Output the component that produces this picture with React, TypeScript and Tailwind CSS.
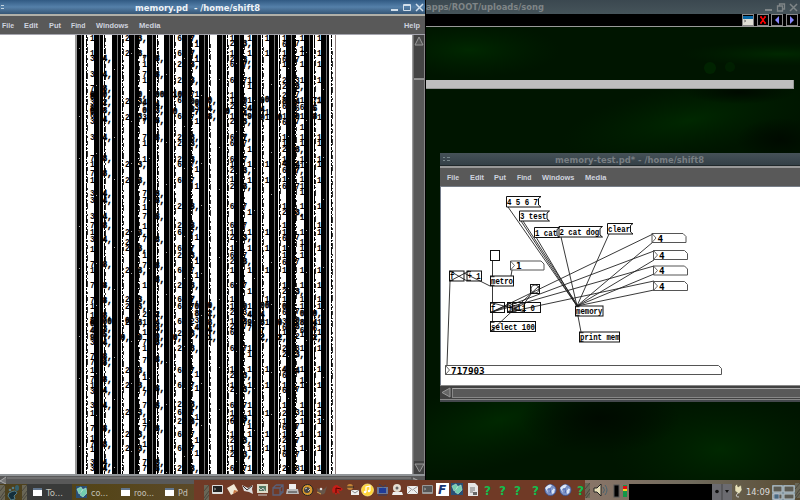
import React from "react";

const STRIPES = Array.from({ length: 15 }, (_, i) => 77 + i * 17.45);

type Column = { x: number; rows: string };

// Each entry is "baseline:text" for one column of overlapping atoms.
const COLUMNS: Column[] = [
  { x: 90, rows: "41:1 56:1 61:3 77:3 91:7 97:0 99:8 105:3 111:8 114:0 118:6 124:3 140:3 161:7 167:1 176:7 183:1 196:3 203:3 219:3 228:7 235:1 242:3 252:1 267:7 273:1 288:7 303:7 309:1 318:1 324:8 326:0 333:4 340:9 345:3 359:7 365:7 373:1 382:7 388:1 394:3 408:3 416:1 431:7 441:1 447:7 452:1 465:3 471:3" },
  { x: 102.500, rows: "61:4, 77:4, 91:8, 97:0, 105:2, 113:8, 122:4, 140:4, 161:8, 176:8, 196:4, 203:4, 219:4, 228:8, 242:4, 267:8, 288:8, 303:8, 318:8, 324:00 331:3, 337:5, 345:4, 359:8, 365:8, 382:8, 393:4, 408:4, 431:8, 447:8, 465:4, 471:4," },
  { x: 125, rows: "41:2 56:2 104:2 120:2 167:2 183:2 235:2 245:2 251:2 273:2 302:2 309:2 323:0 325:2 373:2 388:2 415:2 437:2 451:2" },
  { x: 120.500, rows: "340:0," },
  { x: 137.500, rows: "41:3, 56:3, 97:0, 104:3, 119:3, 167:3, 183:3, 235:3, 251:3, 273:3, 302:3, 309:3, 325:3, 340:0 373:3, 388:3, 415:3, 437:3, 451:3," },
  { x: 142.300, rows: "61:7 67:1 77:7 83:1 105:4 113:0 120:3 124:7 140:7 146:1 162:1 196:7 203:7 210:1 219:7 229:1 242:7 258:1 268:7 288:1 317:2 325:1 335:1 345:7 351:1 363:7 380:1 396:7 408:7 424:1 431:7 447:1 465:7 471:7" },
  { x: 155, rows: "61:8, 77:8, 97:00 107:4, 113:3, 123:8, 140:8, 196:8, 203:8, 219:8, 242:8, 268:8, 282:8, 317:2, 325:4, 331:3, 339:0, 345:8, 362:8, 391:8, 408:8, 431:8, 465:8, 471:8," },
  { x: 177.300, rows: "41:6 56:6 67:2 83:2 103:6 119:6 140:2 146:2 162:2 167:6 183:6 209:2 228:2 235:6 251:6 258:2 273:6 288:2 302:6 309:6 324:6 336:2 351:2 373:6 388:6 407:2 415:6 424:2 437:6 451:6 471:2" },
  { x: 172.800, rows: "97:10 114:0 340:0," },
  { x: 190, rows: "41:7, 56:7, 67:3, 83:3, 97:7 104:0, 112:8, 120:7 140:3, 146:3, 162:3, 167:7 183:7 209:3, 228:3, 235:7 251:7 258:3, 273:7 288:3, 302:7, 309:7 324:2 336:3, 351:3, 373:7 388:7 407:3, 415:7 424:3, 437:7 451:7 471:3," },
  { x: 194.500, rows: "47:1 62:1 97:1 105:0 110:3 115:7 124:1 172:1 189:1 240:1 264:1 278:1 309:0 316:8 323:3 330:4 377:1 391:1 420:1 443:1 456:1" },
  { x: 207.500, rows: "103:0, 111:4, 119:8, 308:0, 316:2, 325:8, 332:4, 340:1," },
  { x: 229.800, rows: "41:1 46:2 56:1 62:2 67:6 83:6 98:1 103:1 109:2 119:1 124:2 140:6 146:6 162:6 167:1 173:2 182:1 189:2 209:6 228:6 235:1 240:2 251:1 258:6 264:2 273:1 288:6 302:1 309:1 315:2 324:1 329:2 335:6 351:6 372:1 378:2 388:1 392:2 408:6 416:1 421:2 424:6 437:1 443:2 451:1 457:2 471:6" },
  { x: 225.300, rows: "114:0 340:" },
  { x: 242.500, rows: "46:3, 62:3, 67:7, 83:7 103:0 109:3 116:4 124:3, 140:7, 146:7 162:7 173:3, 189:3, 209:7 228:7 240:3, 258:7 264:3, 288:7 309:0 315:3 324:8 329:7 351:7 378:3, 392:3, 408:7 421:3, 424:7 443:3, 457:3, 471:7" },
  { x: 247.200, rows: "41:1 56:1 83:1 89:1 103:1 111:4 119:9 152:1 167:1 183:1 215:1 235:1 251:1 273:1 294:1 309:1 317:4 325:9 331:7 351:1 357:1 372:1 388:1 408:1 416:1 429:1 437:1 451:1 471:1" },
  { x: 260, rows: "103:0 112:4 120:9 308:0 317:4 325:8 333:7 340:2," },
  { x: 264.700, rows: "41:1 56:1 102:0, 115:1 120:1 167:1 183:1 235:1 251:1 273:1 302:1 308:0 325:1 372:1 388:1 416:1 437:1 451:1" },
  { x: 282, rows: "41:1 47:6 56:1 62:6 67:1 83:2 89:2 98:2 104:8 109:6 119:1 125:6 140:1 146:1 152:2 162:1 166:4 173:6 182:1 189:6 209:1 215:2 228:1 235:1 241:6 251:1 258:1 265:6 273:1 288:1 294:2 302:1 309:0 315:6 324:3 330:6 335:1 351:2 357:2 372:4 378:6 388:1 393:6 408:1 416:2 424:1 430:6 437:1 443:2 451:1 457:6 471:2" },
  { x: 277.500, rows: "120:0 325:0 340:2," },
  { x: 295, rows: "46:7 62:7 83:3 89:3, 97:7 104:4 111:6 119:0 124:7 152:3, 167:4 173:7, 189:7 215:3, 240:7 264:7 294:3, 314:7 323:0 329:8 339:2 351:3 357:3, 373:4 392:7 415:3 429:7 443:7 457:7 471:3" },
  { x: 299.700, rows: "41:1 52:1 56:1 67:1 83:1 103:1 110:6 119:1 130:1 140:1 146:1 162:1 168:1 182:1 189:1 195:1 209:1 220:1 235:1 245:1 251:1 258:1 273:1 288:1 302:1 309:1 316:0 325:8 333:6 337:1 351:1 372:1 383:1 388:1 408:1 416:1 424:1 437:1 451:1 471:1" },
  { x: 312.500, rows: "103:7 111:5 119:8 316:0, 325:4 331:6 340:2," },
  { x: 317, rows: "41:1 56:1 67:1 83:1 103:1, 120:1 140:1 146:1 162:1 167:1 183:1 209:1 228:1 235:1 251:1 273:1 288:1 302:1 309:1 325:1 335:1 351:1 372:1 388:1 408:1 416:1 424:1 437:1 451:1 471:1" },
];

function MemoryCanvas() {
  return (
    <svg width="412" height="439" viewBox="0 35 412 439" className="block bg-white" shapeRendering="crispEdges">
      <rect x="75" y="35" width="2" height="439" fill="#999" />
      {STRIPES.map((s, i) => {
        const x = Math.round(s);
        const dots = i === 0 ? 86.5 : i === 14 ? 331.5 : x + 10.5 - (i % 3 === 0 ? 1 : 0);
        return (
          <g key={i}>
            <rect x={x} y="35" width={i === 0 ? 7 : i === 14 ? 8 : 9} height="439" fill="#000" />
            <rect x={x + (i === 0 ? 4 : 5)} y="35" width="1" height="439" fill="#777" />
            <line x1={dots} x2={dots} y1="35" y2="474" stroke="#000" strokeWidth="1" strokeDasharray={i % 2 ? "13 1 5 1 4 2" : "3 1 8 1 2 1"} />
            <line x1={dots + 1} x2={dots + 1} y1={37 + i} y2="474" stroke="#333" strokeWidth="1" strokeDasharray="4 3 1 2 6 5 2 3" />
            <line x1={x + 2.5} x2={x + 2.5} y1={48 + ((i * 37) % 53)} y2="474" stroke="#aaa" strokeWidth="1" strokeDasharray="1 67 1 41" />
          </g>
        );
      })}
      <rect x="335" y="35" width="1" height="439" fill="#8c7d7d" />
      <g fill="#000" fontFamily="'Liberation Mono', monospace" fontSize="9.6" fontWeight="bold">
        {COLUMNS.map((c) =>
          c.rows.split(" ").map((r, j) => {
            const [y, t] = r.split(":");
            const heavy = /[04589]/.test(t) || t.includes(",");
            return (
              <text key={`${c.x}-${j}`} x={c.x} y={y} textLength={t.length * 4.7} lengthAdjust="spacingAndGlyphs" stroke="#000" strokeWidth={heavy ? 0.5 : 0}>
                {t}
              </text>
            );
          })
        )}
      </g>
    </svg>
  );
}

function Message({ x, y, w, h, text }: { x: number; y: number; w: number; h: number; text: string }) {
  return (
    <g>
      <path d={`M${x} ${y}h${w}l-2.500 2v${h - 4}l2.500 2h${-w}z`} fill="none" stroke="#111" />
      <text x={x + 0.5} y={y + 8} textLength={text.length * 4.42} lengthAdjust="spacingAndGlyphs">{text}</text>
    </g>
  );
}

function Box({ x, y, w, text, h = 10 }: { x: number; y: number; w: number; text: string; h?: number }) {
  return (
    <g>
      <rect x={x} y={y} width={w} height={h} fill="none" stroke="#111" />
      <path d={`M${x} ${y + 0.7}h4M${x} ${y + h - 0.7}h4`} stroke="#111" />
      <text x={x + 0.5} y={y + 8} textLength={text.length * 4.4} lengthAdjust="spacingAndGlyphs">{text}</text>
    </g>
  );
}

function NumberBox({ x, y, w, text }: { x: number; y: number; w: number; text: string }) {
  return (
    <g>
      <path d={`M${x} ${y}h${w - 3}l3 3v6h${-w}z`} fill="none" stroke="#555" />
      <path d={`M${x} ${y}l4 4.5l-4 4.5`} fill="none" stroke="#444" strokeWidth=".8" />
      <text x={x + 5.6} y={y + 8} fontFamily="'DejaVu Sans Mono', monospace" fontSize="9" textLength={text.length * 5.6} lengthAdjust="spacingAndGlyphs">{text}</text>
    </g>
  );
}

function PatchCanvas() {
  return (
    <svg width="359" height="198" viewBox="441 187 359 198" className="block bg-white">
      <path
        d="M508 207L577 306M521 221L577 306M523 221L578 306M536 237L577 306M561 237L577 306M609 234L577 306M653 242L577 306M654 260L577 306M654 274L577 306M654 290L577 306M492 312L653 234M492 312L654 251M492 312L654 266M509 312L654 281M492.500 260V276M492.500 286V302M492.500 312V321M512 270L511 276M450 281L447 365M450 281L469 271M467 281L450 271M464 273L490 286M491 331L539 286M531 294L524 304M492 312L511 303M493 303L525 312M507 312L526 303M578 316L581 332"
        fill="none" stroke="#222" strokeWidth=".9"
      />
      <g fontFamily="'Liberation Mono', monospace" fontSize="9.6" fontWeight="bold" fill="#000">
        <Message x={506.5} y={196.5} w={34.5} h={10.5} text="4 5 6 7" />
        <Message x={519.5} y={211} w={30} h={10} text="3 test" />
        <Message x={534.5} y={227.5} w={25} h={10} text="1 cat" />
        <Message x={559} y={226.5} w={43.5} h={10.5} text="2 cat dog" />
        <Message x={607.500} y={223.5} w={25.5} h={10.5} text="clear" />
        <rect x="490.500" y="250.500" width="9" height="10" fill="none" stroke="#111" />
        <NumberBox x={510.5} y={261} w={33.5} text="1" />
        <Box x={490.5} y={276} w={23} text="metro" />
        <Box x={449.500} y={271} w={14.5} text="f" />
        <Box x={467} y={271} w={14.5} text="+ 1" />
        <rect x="530.500" y="284.500" width="9" height="9" fill="none" stroke="#111" />
        <circle cx="535" cy="289" r="4" fill="none" stroke="#333" strokeWidth=".8" />
        <Box x={490.5} y={302.5} w={14} text="f" />
        <Box x={507.500} y={302.5} w={17} text="+ 1" />
        <Box x={512.5} y={302.5} w={28} text="% 1 0" />
        <Box x={490.5} y={321.5} w={45} text="select 100" />
        <Box x={575.5} y={306} w={27.5} text="memory" />
        <Box x={579.5} y={332} w={40} text="print mem" />
        <NumberBox x={652} y={233.500} w={34} text="4" />
        <NumberBox x={653.500} y={250.500} w={34} text="4" />
        <NumberBox x={653.500} y={266} w={34} text="4" />
        <NumberBox x={653.500} y={281.500} w={34} text="4" />
        <NumberBox x={445.500} y={365.5} w={276} text="717903" />
      </g>
    </svg>
  );
}

function MenuLabel({ text, w }: { text: string; w: number }) {
  return (
    <svg width={w} height="12" className="block overflow-visible fill-[#cfd3df]">
      <text x="0" y="9" fontFamily="'Liberation Sans', sans-serif" fontSize="8" fontWeight="bold" textLength={w} lengthAdjust="spacingAndGlyphs">{text}</text>
    </svg>
  );
}

function Menus() {
  return (
    <div className="flex items-center gap-[10.5px]">
      <MenuLabel text="File" w={12} />
      <MenuLabel text="Edit" w={14} />
      <MenuLabel text="Put" w={12} />
      <MenuLabel text="Find" w={14.5} />
      <MenuLabel text="Windows" w={32.5} />
      <MenuLabel text="Media" w={21.5} />
    </div>
  );
}

function Title({ text, w, size = 8 }: { text: string; w: number; size?: number }) {
  return (
    <svg width={w} height="13" className="block shrink-0 overflow-visible fill-current">
      <text x="0" y="9.500" textLength={w} lengthAdjust="spacingAndGlyphs" fontFamily="'DejaVu Sans', sans-serif" fontWeight="bold" fontSize={size} className="whitespace-pre">{text}</text>
    </svg>
  );
}

function BackWindow() {
  return (
    <div className="absolute left-[426px] top-0 w-[374px]">
      <div className="flex h-[14px] items-center justify-between bg-gradient-to-b from-[#3b4850] to-[#46545a] text-[#7f8587]">
        <svg width="120" height="13" className="block overflow-visible fill-current">
          <text x="0" y="9" fontSize="8" fontWeight="bold" fontFamily="'DejaVu Sans', sans-serif" textLength="118" lengthAdjust="spacingAndGlyphs">apps/ROOT/uploads/song</text>
        </svg>
        <svg width="38" height="12" className="block stroke-current fill-none">
          <path d="M3 9h7" strokeWidth="2" />
          <path d="M15.500 5h5v5h-5zM17.500 5V3h5v5h-2" strokeWidth="1.300" />
          <path d="M28 3l7 7M35 3l-7 7" strokeWidth="1.500" />
        </svg>
      </div>
      <div className="flex h-[13px] justify-end gap-[2.5px] border-b border-[#999] bg-black pr-[2.5px]">
        {[0, 1, 2, 3].map((i) => (
          <svg key={i} width="12" height="12" className="block" viewBox="0 0 12 12">
            <rect x=".5" y=".5" width="11" height="11" fill="#000" stroke="#888" />
            {i === 0 && <><path d="M1 2h10v9H1z" fill="#deded4" /><path d="M1 2h10v3H1z" fill="#0869a8" /><path d="M2 6l2 1-2 1" stroke="#555" fill="none" strokeWidth=".6" /></>}
            {i === 1 && <path d="M4 3l4 6M8 3L4 9M3 3h2M7 3h2M3 9h2M7 9h2" stroke="#f00" strokeWidth="1.400" />}
            {i === 2 && <path d="M8 2v8L4 6z" fill="#8888ff" />}
            {i === 3 && <path d="M4 2v8l4-4z" fill="#8888ff" />}
          </svg>
        ))}
      </div>
      <div className="mt-[53px] h-[9px] w-[368px] border-b border-r border-[#999] bg-[#bebebe]" />
    </div>
  );
}

function TestWindow() {
  return (
    <div className="absolute left-[440px] top-[153px] flex h-[249px] w-[360px] flex-col bg-[#747c8a]">
      <div className="flex h-[12px] items-center bg-gradient-to-b from-[#465258] to-[#344047] pl-[3px] text-[#787e82]">
        <svg width="8" height="8" className="fill-[#78878b]"><path d="M0 2h2v1H0zM4 2h3v1H4zM0 5h2v1H0zM4 5h3v1H4z" /></svg>
        <div className="ml-[104px]"><Title text="memory-test.pd* - /home/shift8" w={149} /></div>
      </div>
      <div className="h-px bg-[#20282b]" />
      <div className="flex h-[21px] items-center border-b border-t-2 border-b-[#777e88] border-t-[#999] bg-[#595959] pl-[7px]"><Menus /></div>
      <div className="h-[198px] pl-px"><PatchCanvas /></div>
      <div className="flex h-[15px] items-center border-y border-[#888] bg-[#414141]">
        <svg width="12" height="11"><path d="M10 1L2 5.500L10 10z" fill="#666" stroke="#999" /></svg>
        <div className="h-[10px] flex-1 border border-r-0 border-[#888] border-t-[#aaa] bg-[#595959]" />
      </div>
      <div className="h-[2px] bg-[#44484c]" />
    </div>
  );
}

function MainWindow() {
  return (
    <div className="absolute left-0 top-0 flex h-[485px] w-[426px] flex-col border-r border-black bg-[#595959]">
      <div className="flex h-[14px] items-center bg-gradient-to-b from-[#315a83] via-[#5580a9] to-[#365675] text-[#eef3f8]">
        <svg width="8" height="8" className="ml-px fill-[#c2d2df]"><path d="M0 2h3v1H0zM0 5h3v1H0z" /></svg>
        <div className="ml-[125.500px]"><Title text="memory.pd  - /home/shift8" w={125} /></div>
        <svg width="36" height="12" className="ml-auto block fill-none stroke-[#d2dfeb]">
          <path d="M2 9h7" strokeWidth="2" /><path d="M14.500 3.500h7v6h-7zM14 4.500h8" /><path d="M27 3l7 7M34 3l-7 7" strokeWidth="1.500" />
        </svg>
      </div>
      <div className="flex h-[21px] items-center justify-between border-b border-t-2 border-b-[#a5a5ae] border-t-[#b1b0a8] bg-[#595959] pl-[1.500px] pr-[5px]">
        <Menus />
        <MenuLabel text="Help" w={16} />
      </div>
      <div className="flex h-[439px]">
        <MemoryCanvas />
        <svg width="13" height="439" className="block bg-[#424242]">
          <path d="M.5 0v439" stroke="#999" strokeWidth="2" /><path d="M2 0h10v42H2z" fill="#444" /><path d="M7 2l4 8H3z" fill="#555" stroke="#999" />
          <rect x="2" y="44" width="10" height="382" fill="#595959" /><path d="M2 44h10" stroke="#aaa" strokeWidth="1.500" /><path d="M3 429h9l-4.500 8z" fill="#555" stroke="#999" /><path d="M12.500 0v439" stroke="#888" />
        </svg>
      </div>
      <div className="h-[11px] border-t-2 border-[#929699] bg-[#595959]">
        <svg width="425" height="9"><path d="M6 1L0 5l6 3M413 2l8 4-8 3" fill="#777" stroke="#aaa" /><path d="M7 2h404" stroke="#888" /></svg>
      </div>
    </div>
  );
}

function TrayIcon({ i }: { i: number }) {
  if ([18, 19, 20, 21, 24].includes(i)) return <text x="7.500" y="11.500" textAnchor="middle" fill="#12bf4f" fontFamily="'DejaVu Sans', sans-serif" fontWeight="bold" fontSize="12">?</text>;
  switch (i) {
    case 0: case 14: return <><rect x="2" y="2" width="11" height="9" rx="1" fill={i ? "#999" : "#ddd"} /><rect x="3" y="3" width="9" height="6" fill={i ? "#555" : "#222"} /><path d="M4 5l2 1-2 1" stroke="#aaa" fill="none" strokeWidth=".7" /></>;
    case 1: return <><path d="M2 5l7-4 4 7-7 4z" fill="#f0e8d6" /><path d="M8 11l5-3-4-1" fill="#c87843" /></>;
    case 2: return <><path d="M2 2l6 3 5-3-1 4 1 5-4-2-5-1z" fill="#ddd" /><path d="M3 3l4 4M12 3L7 7" stroke="#333" /></>;
    case 3: return <><rect x="2" y="1" width="11" height="9" fill="#dedbc8" /><rect x="4" y="3" width="7" height="5" fill="#567963" /><path d="M3 12h9M4 5l2 2 2-2 2 3" stroke="#ccc" fill="none" /></>;
    case 4: return <path d="M3 5h7v7H3zM6 2h7v7h-3M3 5l3-3M10 5l3-3M10 12l3-3" fill="none" stroke="#596078" strokeWidth="1.300" />;
    case 5: return <><path d="M4 1h7v5H4z" fill="#eee" /><path d="M2 6h11l1 5H1z" fill="#bbb" /><path d="M3 9h9" stroke="#333" /></>;
    case 6: return <><circle cx="7.500" cy="7" r="5.500" fill="#d7982d" stroke="#222" /><circle cx="7" cy="7" r="3" fill="#444" /><path d="M5 6l2-1M8 8l2-2" stroke="#ccc" fill="none" /></>;
    case 7: return <><path d="M2 5l4 2q3 0 6-4l-2 7q-3 3-7 0z" fill="#67564a" /><circle cx="6" cy="6" r="1.300" fill="#ddd" /><path d="M2 9l4 2" stroke="#d7a34a" /></>;
    case 8: return <><path d="M2 7q1-5 5-5l6 4-2 2-3-1 2 4-3-1-1 2-2-3-1 2z" fill="#c61e17" /><path d="M6 10V5l5 1" stroke="#500" fill="none" /></>;
    case 9: return <><circle cx="5" cy="4" r="3" fill="#c68538" /><path d="M2 4h7" stroke="#222" /><rect x="6" y="7" width="8" height="5" fill="#eee" /><path d="M6 7l4 3 4-3" stroke="#888" fill="none" /></>;
    case 10: return <><circle cx="7.500" cy="7" r="6" fill="#ffd335" stroke="#fff090" strokeWidth=".7" /><path d="M6 9V4l4-1v5" stroke="#fff" fill="none" strokeWidth="1.200" /><circle cx="5" cy="9" r="1.300" fill="#fff" /><circle cx="9" cy="8" r="1.300" fill="#fff" /></>;
    case 11: return <><rect x="2" y="4" width="11" height="7" fill="#6c7897" /><rect x="4" y="5" width="7" height="5" fill="#203c99" /><path d="M4 1l4 3 3-2M3 12h9" stroke="#343d63" fill="none" /></>;
    case 12: return <><circle cx="7" cy="5" r="4" fill="#e4ddd1" /><circle cx="7" cy="5" r="1.500" fill="#666" /><path d="M3 9h9l1 3H2z" fill="#eee" /></>;
    case 13: return <><rect x="2" y="3" width="11" height="8" fill="#eee" /><path d="M2 3l5.500 4L13 3M2 11l4-4M13 11L9 7" fill="none" stroke="#777" strokeWidth=".7" /></>;
    case 15: return <><rect x="1" y="0" width="13" height="13" fill="#fff" /><text x="3" y="11" fill="#163574" fontFamily="'DejaVu Sans', sans-serif" fontWeight="bold" fontStyle="italic" fontSize="12">F</text></>;
    case 16: return <TealIcon />;
    case 17: return <><path d="M3 0h7l3 3v10H3z" fill="#e5e5e5" /><path d="M5 5h5M5 7h5M5 9h3" stroke="#777" /><path d="M8 9h4v3H8z" fill="#666" /></>;
    default: return <><circle cx="7.500" cy="7" r="5.600" fill="#7b91c5" stroke="#334d91" strokeWidth=".7" /><path d="M2 5q4-5 7-3l-2 3-3 1 1 4M8 5l4 1-1 4-2 1z" fill="#dbe6f7" /><path d="M5 6h5M8 7l-1 3" stroke="#4966b1" /></>;
  }
}

function TealIcon() {
  return <><rect x="1" y="0" width="12" height="12" fill="#294f75" /><path d="M2 3l4-2 2 3-4 4zM7 4l4-2 1 5-4 4-3-2z" fill="#72ceb0" stroke="#bce4ce" strokeWidth=".6" /></>;
}

function Grip() {
  return <svg width="5" height="15" className="block shrink-0 bg-[#696656]"><path d="M0 6l5-6M0 13L5 6M1 15l4-5" stroke="#3c3a32" strokeWidth=".7" /></svg>;
}

function Task({ label, w, teal }: { label: string; w: number; teal?: boolean }) {
  return (
    <div className="flex h-[15px] items-center gap-[4px]">
      {teal ? <svg width="12" height="12" className="block shrink-0"><TealIcon /></svg> : <span className="h-[8px] w-[9px] shrink-0 border-t-2 border-[#61758d] bg-white" />}
      <svg width={w} height="13" className="block overflow-visible fill-[#c4c2bb]">
        <text x="0" y="10" fontFamily="'DejaVu Sans', sans-serif" fontSize="9" textLength={w} lengthAdjust="spacingAndGlyphs">{label}</text>
      </svg>
    </div>
  );
}

function Taskbar() {
  return (
    <div className="absolute inset-x-0 bottom-0 flex h-[20px] items-end">
      <div className="flex h-[16px] w-[210px] items-center bg-gradient-to-r from-[#4c401d] via-[#554519] to-[#5c4a2b]">
        <Grip />
        <svg width="17" height="15" viewBox="0 0 17 15"><path d="M4 8q7-4 8 0l-3 3 1 3-4 1-3-4z" fill="#142f3c" stroke="#537c88" /><circle cx="5" cy="5" r="1.300" fill="#537c88" /><circle cx="8" cy="3" r="1.300" fill="#537c88" /><ellipse cx="12" cy="3" rx="2" ry="3" fill="#335f6d" /></svg>
        <Grip />
        <div className="flex h-full w-[45px] items-center bg-[#393a39] pl-[6px]"><Task label="To..." w={17} /></div>
        <div className="w-[49px] pl-[3px]"><Task label="co..." w={17} teal /></div>
        <div className="w-[44px]"><Task label="roo..." w={20} /></div>
        <div className="w-[35px]"><Task label="Pd" w={10} /></div>
      </div>
      <div className="-ml-[16px] flex h-[20px] w-[395px] items-end bg-[#703a26]">
        <div className="ml-[10px]"><Grip /></div>
        <div className="ml-px flex h-[17px]">
          {Array.from({ length: 25 }, (_, i) => (
            <svg key={i} width="15" height="15" className={`block shrink-0 overflow-visible ${i === 21 ? "ml-[3px]" : ""}`}><TrayIcon i={i} /></svg>
          ))}
        </div>
      </div>
      <div className="-ml-[4px] flex h-[20px] flex-1 items-center bg-gradient-to-r from-[#8a7568] via-[#6f6a5c] to-[#584b32]">
        <Grip />
        <svg width="39" height="16" viewBox="0 0 39 16"><path d="M4 6h3l4-4v12L7 10H4z" fill="#e8dfb8" stroke="#222" /><path d="M13 5q3 3 0 6M15 3q4 5 0 10" stroke="#48636f" fill="none" /><rect x="24" y="3" width="5" height="12" fill="#000" stroke="#555" /><rect x="33" y="3" width="4" height="12" fill="#129747" /><path d="M33 4h4v3h-4z" fill="#e40c10" /><path d="M33 7h4v2h-4z" fill="#efd31a" /></svg>
        <div className="mt-[4px] h-[16px] w-[83px] bg-black" />
        <svg width="20" height="16" className="mt-[4px] block bg-[#6b6b70]"><circle cx="5" cy="7.500" r="1.800" fill="#111" /><path d="M10 0v16" stroke="#444" /><path d="M13 6h4l-2 3z" fill="#111" /></svg>
        <svg width="13" height="15"><path d="M3 3l2-2 1 3 3-2 1 5-3 4-4-3z" fill="#e7e1ba" stroke="#55513c" strokeWidth=".5" /><path d="M6 10q-4 4 1 4" stroke="#ccc" fill="none" /></svg>
        <svg width="24" height="13" className="ml-px mt-[3px] block overflow-visible fill-[#ddd]"><text x="0" y="10" fontFamily="'DejaVu Sans', sans-serif" fontSize="9" textLength="24" lengthAdjust="spacingAndGlyphs">14:09</text></svg>
        <svg width="23" height="15" className="ml-[2px] mt-[4px] block bg-[#8496a0]"><path d="M1 1h9v6H1zM12 1h10v6H12zM1 9h9v5H1zM12 9h10v5H12z" fill="#5c5b53" stroke="#b8c5ca" /><path d="M2 9h5v5H2z" fill="#486981" stroke="#ccd" strokeWidth=".6" /></svg>
        <Grip />
      </div>
    </div>
  );
}

export default function App() {
  return (
    <main className="relative h-[500px] w-[800px] overflow-hidden bg-[#001500]">
      <svg width="800" height="500" className="absolute inset-0">
        <defs>
          <radialGradient id="leaf"><stop offset="0" stopColor="#002800" /><stop offset="1" stopColor="#002000" stopOpacity="0" /></radialGradient>
          <radialGradient id="shade"><stop offset="0" stopColor="#000a00" /><stop offset="1" stopColor="#000a00" stopOpacity="0" /></radialGradient>
        </defs>
        <ellipse cx="470" cy="50" rx="90" ry="28" fill="url(#leaf)" />
        <ellipse cx="690" cy="120" rx="130" ry="36" fill="url(#leaf)" transform="rotate(-10 690 120)" />
        <ellipse cx="780" cy="54" rx="100" ry="12" fill="url(#leaf)" />
        <ellipse cx="500" cy="420" rx="130" ry="45" fill="url(#leaf)" transform="rotate(-16 500 420)" />
        <ellipse cx="720" cy="450" rx="110" ry="55" fill="url(#leaf)" />
        <ellipse cx="740" cy="92" rx="55" ry="12" fill="url(#shade)" />
        <ellipse cx="600" cy="418" rx="80" ry="36" fill="url(#shade)" />
        <ellipse cx="781" cy="140" rx="45" ry="22" fill="url(#shade)" />
        <circle cx="710" cy="68" r="6" fill="#004000" opacity=".35" /><circle cx="730" cy="67" r="5" fill="#004000" opacity=".25" />
      </svg>
      <BackWindow />
      <TestWindow />
      <MainWindow />
      <Taskbar />
    </main>
  );
}
